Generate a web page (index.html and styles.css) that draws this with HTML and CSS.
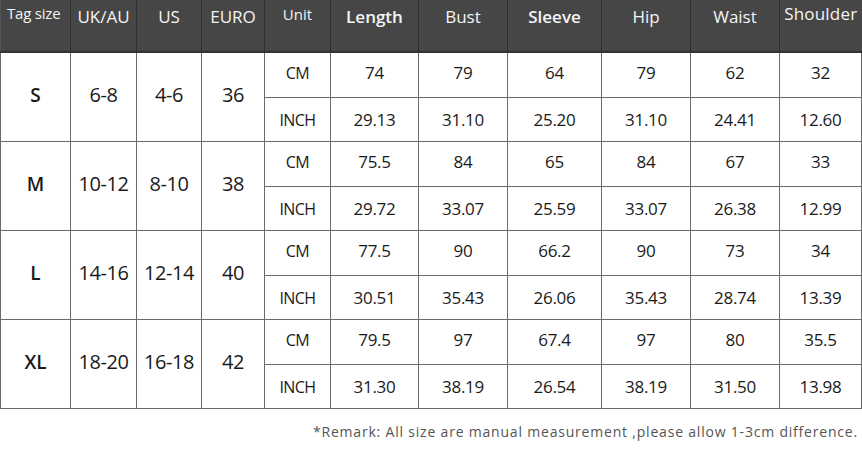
FILE: index.html
```html
<!DOCTYPE html>
<html>
<head>
<meta charset="utf-8">
<link rel="stylesheet" href="styles.css">
</head>
<body>
<table class="size-table">
  <colgroup>
    <col class="c70"><col class="c66"><col class="c65"><col class="c63"><col class="c66">
    <col class="c88"><col class="c89"><col class="c94"><col class="c89"><col class="c89"><col class="c82">
  </colgroup>
  <thead>
    <tr>
      <th class="tag">Tag size</th><th>UK/AU</th><th>US</th><th>EURO</th><th class="unit">Unit</th>
      <th class="bold">Length</th><th>Bust</th><th class="bold">Sleeve</th><th>Hip</th><th>Waist</th><th class="shoulder">Shoulder</th>
    </tr>
  </thead>
  <tbody>
    <tr class="cm">
      <td rowspan="2" class="size">S</td><td rowspan="2" class="big">6-8</td><td rowspan="2" class="big">4-6</td><td rowspan="2" class="big">36</td>
      <td class="u">CM</td><td>74</td><td>79</td><td>64</td><td>79</td><td>62</td><td>32</td>
    </tr>
    <tr class="in">
      <td class="u">INCH</td><td>29.13</td><td>31.10</td><td>25.20</td><td>31.10</td><td>24.41</td><td>12.60</td>
    </tr>
    <tr class="cm">
      <td rowspan="2" class="size">M</td><td rowspan="2" class="big">10-12</td><td rowspan="2" class="big">8-10</td><td rowspan="2" class="big">38</td>
      <td class="u">CM</td><td>75.5</td><td>84</td><td>65</td><td>84</td><td>67</td><td>33</td>
    </tr>
    <tr class="in">
      <td class="u">INCH</td><td>29.72</td><td>33.07</td><td>25.59</td><td>33.07</td><td>26.38</td><td>12.99</td>
    </tr>
    <tr class="cm">
      <td rowspan="2" class="size">L</td><td rowspan="2" class="big">14-16</td><td rowspan="2" class="big">12-14</td><td rowspan="2" class="big">40</td>
      <td class="u">CM</td><td>77.5</td><td>90</td><td>66.2</td><td>90</td><td>73</td><td>34</td>
    </tr>
    <tr class="in">
      <td class="u">INCH</td><td>30.51</td><td>35.43</td><td>26.06</td><td>35.43</td><td>28.74</td><td>13.39</td>
    </tr>
    <tr class="cm">
      <td rowspan="2" class="size">XL</td><td rowspan="2" class="big">18-20</td><td rowspan="2" class="big">16-18</td><td rowspan="2" class="big">42</td>
      <td class="u">CM</td><td>79.5</td><td>97</td><td>67.4</td><td>97</td><td>80</td><td>35.5</td>
    </tr>
    <tr class="in">
      <td class="u">INCH</td><td>31.30</td><td>38.19</td><td>26.54</td><td>38.19</td><td>31.50</td><td>13.98</td>
    </tr>
  </tbody>
</table>
<p class="remark">*Remark: All size are manual measurement ,please allow 1-3cm difference.</p>
</body>
</html>
```

FILE: styles.css
```css
html, body {
  margin: 0;
  padding: 0;
  background: #ffffff;
}

body {
  width: 862px;
  font-family: "Open Sans", "Noto Sans", sans-serif;
  color: #1a1a1a;
}

.size-table {
  border-collapse: collapse;
  table-layout: fixed;
  width: 862px;
}

.c70 { width: 70px; }
.c66 { width: 66px; }
.c65 { width: 65px; }
.c63 { width: 63px; }
.c88 { width: 88px; }
.c89 { width: 89px; }
.c94 { width: 94px; }
.c82 { width: 82px; }

.size-table th {
  height: 52px;
  padding: 6px 0 0;
  box-sizing: border-box;
  background: #464646;
  color: #f4f4f4;
  font-family: "Open Sans", "Noto Sans", sans-serif;
  font-weight: 400;
  font-size: 17px;
  vertical-align: top;
  text-align: center;
  border-left: 1px solid #2f2f2f;
  border-bottom: 2px solid #333;
  line-height: 22px;
}

.size-table th:first-child {
  border-left: 1px solid #555;
}

.size-table th.tag {
  text-align: left;
  padding-left: 6px;
  padding-top: 2px;
  font-size: 15px;
  letter-spacing: -0.2px;
}

.size-table th.unit {
  padding-top: 3px;
  font-size: 15px;
}

.size-table th.shoulder {
  padding-top: 3px;
  font-size: 17px;
  letter-spacing: 0.2px;
}

.size-table th.bold {
  font-weight: 600;
}

.size-table td {
  border: 1px solid #6a6a6a;
  text-align: center;
  vertical-align: middle;
  font-size: 17px;
  padding: 0;
  height: 44px;
  box-sizing: border-box;
  line-height: 20px;
  letter-spacing: -0.3px;
}

.size-table tr.cm td {
  height: 45px;
  padding-bottom: 3px;
}

.size-table tr.in td {
  padding-top: 2px;
}

.size-table td.big {
  font-size: 20px;
  padding: 0;
  letter-spacing: -0.4px;
}

.size-table td.size {
  font-weight: 600;
  font-size: 19px;
  padding: 0;
  letter-spacing: 0;
}

.size-table td.u {
  font-size: 16px;
  letter-spacing: -0.6px;
}

.remark {
  margin: 14px 4px 0 0;
  text-align: right;
  font-family: "Open Sans", "Noto Sans", sans-serif;
  font-size: 14px;
  line-height: 18px;
  letter-spacing: 0.8px;
  color: #555;
}
```
